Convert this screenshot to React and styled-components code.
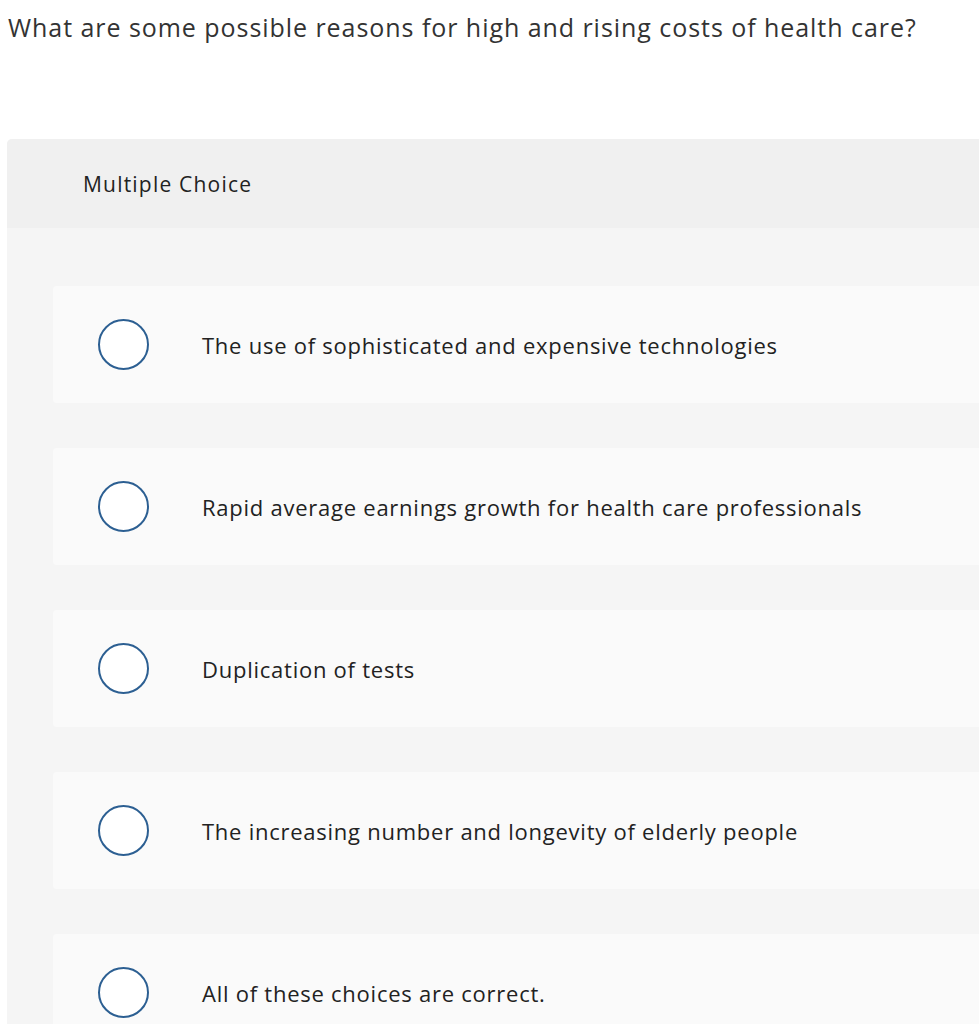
import React from "react";
import styled, { createGlobalStyle } from "styled-components";

const GlobalStyle = createGlobalStyle`
  html, body {
    margin: 0;
    padding: 0;
    background: #fff;
    overflow: hidden;
  }
  body {
    font-family: "Open Sans", "Liberation Sans", sans-serif;
    color: #333;
  }
`;

const Page = styled.div`
  width: 1200px;
  padding-top: 10px;
`;

const Question = styled.h1`
  margin: 0 0 0 8px;
  font-size: 25px;
  font-weight: 400;
  letter-spacing: 0.95px;
  line-height: 34px;
  color: #333;
`;

const Panel = styled.section`
  margin: 95px 0 0 7px;
  width: 1100px;
  border-radius: 5px 5px 0 0;
  overflow: hidden;
  background: #f5f5f5;
`;

const PanelHeader = styled.div`
  height: 89px;
  display: flex;
  align-items: center;
  padding-left: 76px;
  background: #f0f0f0;
  font-size: 21px;
  letter-spacing: 1.2px;
  color: #222;
`;

const Options = styled.div`
  display: flex;
  flex-direction: column;
  gap: 45px;
  padding: 58px 0 40px 46px;
`;

const Option = styled.label`
  height: 117px;
  display: flex;
  align-items: center;
  background: #fafafa;
  border-radius: 4px;
  cursor: pointer;
`;

const Radio = styled.span`
  box-sizing: border-box;
  width: 51px;
  height: 51px;
  margin-left: 45px;
  border-radius: 50%;
  border: 2px solid #2c5f92;
  background: #fff;
  flex-shrink: 0;
`;

const OptionText = styled.span`
  margin-left: 53px;
  font-size: 22px;
  letter-spacing: 0.75px;
  color: #222;
`;

const choices = [
  "The use of sophisticated and expensive technologies",
  "Rapid average earnings growth for health care professionals",
  "Duplication of tests",
  "The increasing number and longevity of elderly people",
  "All of these choices are correct.",
];

export default function App() {
  return (
    <>
      <GlobalStyle />
      <Page>
        <Question>What are some possible reasons for high and rising costs of health care?</Question>
        <Panel>
          <PanelHeader>Multiple Choice</PanelHeader>
          <Options>
            {choices.map((c) => (
              <Option key={c}>
                <Radio />
                <OptionText>{c}</OptionText>
              </Option>
            ))}
          </Options>
        </Panel>
      </Page>
    </>
  );
}
